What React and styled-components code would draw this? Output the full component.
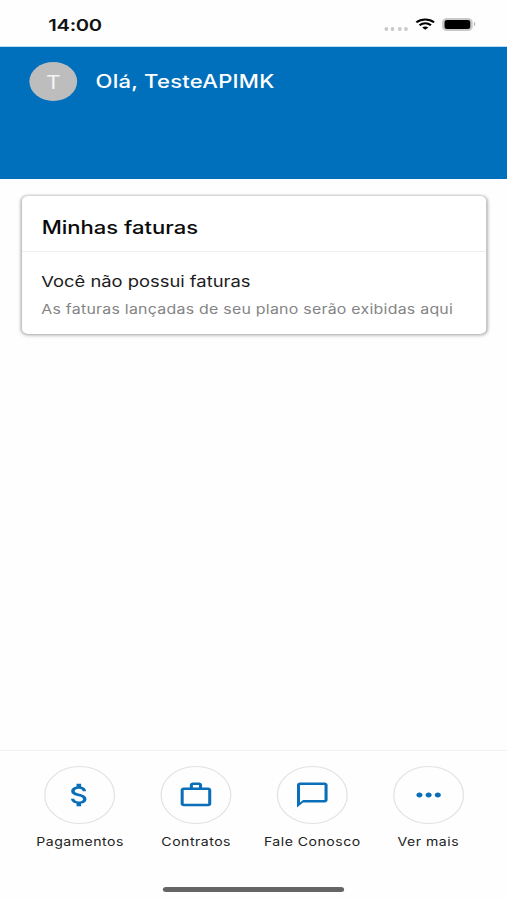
import React from 'react';
import styled, { createGlobalStyle } from 'styled-components';
import {
  MdAttachMoney,
  MdChatBubbleOutline,
  MdMoreHoriz,
  MdWorkOutline,
} from 'react-icons/md';

const actions = [
  { label: 'Pagamentos', icon: MdAttachMoney },
  { label: 'Contratos', icon: MdWorkOutline },
  { label: 'Fale Conosco', icon: MdChatBubbleOutline },
  { label: 'Ver mais', icon: MdMoreHoriz },
];

const App = () => (
  <>
    <GlobalStyle />
    <Screen>
      <StatusBar>
        <Clock>14:00</Clock>
        <Signal>
          <Dot />
          <Dot />
          <Dot />
          <Dot />
        </Signal>
        <Wifi viewBox="0 0 17 12">
          <path d="M1 4.3C5.3.3 11.7.3 16 4.3M3.7 7.2C6.6 4.7 10.4 4.7 13.3 7.2" />
          <path className="tip" d="M5.9 9.5C7.5 8.2 9.5 8.2 11.1 9.5L8.5 12Z" />
        </Wifi>
        <Battery />
        <BatteryCap />
      </StatusBar>

      <Header>
        <Avatar>T</Avatar>
        <Greeting>Olá, TesteAPIMK</Greeting>
      </Header>

      <Content>
        <Card>
          <CardTitle>Minhas faturas</CardTitle>
          <CardBody>
            <Message>Você não possui faturas</Message>
            <Hint>As faturas lançadas de seu plano serão exibidas aqui</Hint>
          </CardBody>
        </Card>
      </Content>

      <Footer>
        {actions.map(({ label, icon: Icon }) => (
          <Action key={label}>
            <Circle>
              <Icon size={30} />
            </Circle>
            <Label>{label}</Label>
          </Action>
        ))}
      </Footer>

      <HomeArea>
        <HomeIndicator />
      </HomeArea>
    </Screen>
  </>
);

const GlobalStyle = createGlobalStyle`
  * {
    box-sizing: border-box;
  }

  body {
    margin: 0;
    overflow: hidden;
    background: #FEFEFE;
  }
`;

// 414px wide phone layout, widened to fill a 507px window
const Screen = styled.div`
  display: flex;
  flex-direction: column;
  width: 414px;
  height: 900px;
  transform: scaleX(1.22464);
  transform-origin: 0 0;

  background: #FEFEFE;
  color: #111;
  font-family: Inter, "Liberation Sans", sans-serif;
  white-space: nowrap;
`;

const StatusBar = styled.div`
  display: flex;
  align-items: center;
  flex: none;
  height: 46px;
  padding: 2px 26px 0 39.5px;
`;

const Clock = styled.time`
  margin: 1px auto 0 0;

  font-size: 16.5px;
  font-weight: 600;
  line-height: 20px;
  letter-spacing: -0.3px;
`;

const Signal = styled.div`
  display: flex;
  gap: 2.1px;
  margin-top: 9px;
`;

const Dot = styled.span`
  width: 3.2px;
  height: 4px;
  border-radius: 50%;
  background: #C8C8C8;
`;

const Wifi = styled.svg`
  width: 16.5px;
  height: 12px;
  margin-left: 5.5px;

  fill: none;
  stroke: #000;
  stroke-width: 2;

  .tip {
    fill: #000;
    stroke: none;
  }
`;

const Battery = styled.div`
  width: 25px;
  height: 13px;
  margin-left: 6px;
  border: 2px solid #C9C9C9;
  border-radius: 4px;
  background: #000;
`;

const BatteryCap = styled.div`
  width: 1.5px;
  height: 4px;
  margin-left: 0.5px;
  border-radius: 0 2px 2px 0;
  background: #B5B5B5;
`;

const Header = styled.header`
  display: flex;
  align-items: flex-start;
  flex: none;
  height: 133px;
  padding: 16px 24px;
  border-top: 1px solid #B9DBF1;
  background: #0070BC;
`;

const Avatar = styled.div`
  display: flex;
  align-items: center;
  justify-content: center;
  width: 39px;
  height: 39px;
  margin-top: -1px;
  border-radius: 50%;
  background: #BDBDBD;

  color: #F4F4F4;
  font-size: 18.5px;
`;

const Greeting = styled.h1`
  margin: 7px 0 0 15px;

  color: #FFF;
  font-size: 18px;
  font-weight: 500;
  line-height: 24px;
  letter-spacing: 0.2px;
`;

const Content = styled.main`
  flex: 1;
  padding: 17px 17px 0 18px;
`;

const Card = styled.section`
  height: 138px;
  border-radius: 5px;
  background: #FFF;
  box-shadow: 0 0 2px 1px rgba(0, 0, 0, 0.13), 0 1px 4px rgba(0, 0, 0, 0.28);
`;

const CardTitle = styled.h2`
  height: 56px;
  margin: 0;
  padding: 20px 16px 0;
  border-bottom: 1px solid #ECEFF0;

  color: #0A0A0A;
  font-size: 18px;
  font-weight: 550;
  line-height: 24px;
`;

const CardBody = styled.div`
  padding: 20px 15.7px 0;
`;

const Message = styled.p`
  margin: 0;

  color: #1C1C1C;
  font-size: 15px;
  line-height: 20px;
`;

const Hint = styled.p`
  margin: 8px 0 0;

  color: #858585;
  font-size: 13px;
  line-height: 18px;
  letter-spacing: 0.2px;
`;

const Footer = styled.nav`
  display: flex;
  justify-content: center;
  flex: none;
  height: 119px;
  padding: 15px 0 0 1.2px;
  border-top: 1px solid #F2F2F2;
`;

const Action = styled.a`
  display: flex;
  flex-direction: column;
  align-items: center;
  width: 94.8px;
`;

const Circle = styled.span`
  display: flex;
  align-items: center;
  justify-content: center;
  width: 58px;
  height: 58px;
  border: 1px solid #E2E2E2;
  border-radius: 50%;

  color: #0A6EB8;
`;

const Label = styled.span`
  margin-top: 10px;

  color: #222;
  font-size: 11.5px;
  line-height: 16px;
  letter-spacing: 0.4px;
`;

const HomeArea = styled.div`
  display: flex;
  justify-content: center;
  flex: none;
  height: 31px;
  padding-top: 18px;
`;

const HomeIndicator = styled.div`
  width: 148px;
  height: 5px;
  border-radius: 3px;
  background: #656565;
`;

export default App;
